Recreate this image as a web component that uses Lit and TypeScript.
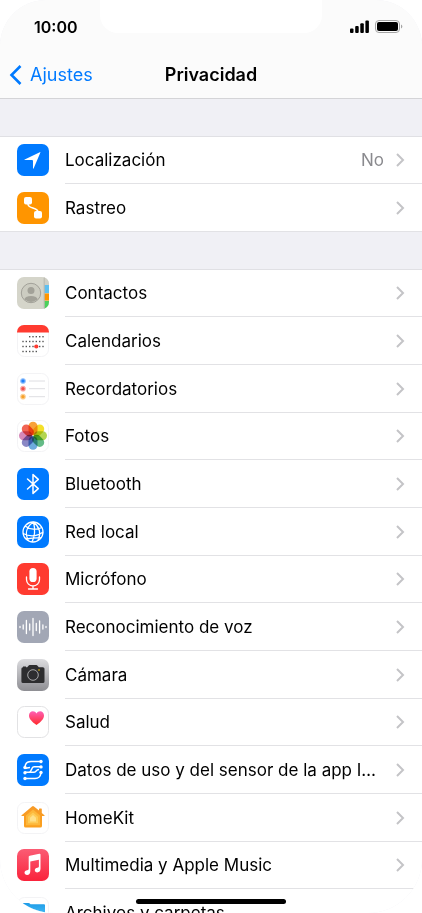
import { LitElement, html, svg, css, nothing, SVGTemplateResult } from "lit";
import { customElement, property } from "lit/decorators.js";

const petals = ["#f7941d", "#f2dc0c", "#a9cf38", "#4fb276", "#5a9fd8", "#7a78bd", "#cf77ae", "#ef4e3c"];
const dotColumns = [6, 9.3, 12.7, 16, 19.3, 22.7, 26];
const dotRows: [number, number, number][] = [[11.7, 2, 7], [16.5, 0, 7], [21.5, 0, 7], [26.5, 0, 5]];

const outline = svg`<rect x=".5" y=".5" width="31" height="31" rx="7" fill="#fff" stroke="#f3f3f5"/>`;
const tile = (fill: string) => svg`<rect width="32" height="32" rx="7" fill=${fill}/>`;

const icons: Record<string, SVGTemplateResult> = {
  location: svg`${tile("#007aff")}<path d="M23.4 8.6 16.6 24.4q-.5.9-.6-.3V17q0-1-1-1H7.9q-1.200-.1-.2-.6L22.800 8.200q.8-.3.600.4z" fill="#fff"/>`,
  tracking: svg`${tile("#ff9500")}<path d="M11 9v3.200c0 4.600 10 3 10 7.800v3" fill="none" stroke="#fff" stroke-width="1.500"/><rect x="7" y="5" width="8" height="7.500" rx="2" fill="#fff"/><rect x="17" y="19" width="8" height="7.500" rx="2" fill="#fff"/>`,
  contacts: svg`<clipPath id="c"><rect width="32" height="32" rx="7"/></clipPath>
    <g clip-path="url(#c)"><rect width="32" height="32" fill="#d5d5ca"/><path d="M27.500 0H32v8h-4.500z" fill="#cfcfc5"/><path d="M27.500 8H32v8h-4.500z" fill="#5fc0f0"/><path d="M27.500 16.500H32v7h-4.500z" fill="#ff9500"/><path d="M27.500 24H32v8h-4.500z" fill="#4cd05c"/><path d="M27.200 0v32" stroke="#b0b0a6" stroke-width=".8"/></g>
    <clipPath id="p"><circle cx="14" cy="16" r="9"/></clipPath>
    <circle cx="14" cy="16" r="9.700" fill="#ccccc1" stroke="#9c9b93" stroke-width=".9"/>
    <g clip-path="url(#p)" fill="#a2a198"><circle cx="14" cy="13.600" r="3.500"/><ellipse cx="14" cy="22.500" rx="6.700" ry="3.600"/></g>`,
  calendar: svg`${outline}<path d="M0 7.500V7a7 7 0 0 1 7-7h18a7 7 0 0 1 7 7v.5z" fill="#ff3b30"/>
    ${dotRows.map(([y, from, to]) => dotColumns.slice(from, to).map((x) => svg`<rect x=${x - 0.7} y=${y - 0.7} width="1.400" height="1.400" fill="#555"/>`))}
    <circle cx="19.300" cy="21.500" r="2.100" fill="#ff3b30"/>`,
  reminders: svg`${outline}${[["#1f80fa", 8], ["#f2504a", 15.7], ["#f7a12a", 23.7]].map(
    ([c, y]) => svg`<circle cx="6" cy=${y} r="2.600" fill=${c} fill-opacity=".35" stroke=${c} stroke-opacity=".5" stroke-width=".6"/><circle cx="6" cy=${y} r="1.800" fill=${c}/><path d=${`M12 ${y}h16`} stroke="#dedee2"/>`)}`,
  photos: svg`${outline}<g class="petals">${petals.map(
    (c, i) => svg`<rect x="11.500" y="1.700" width="9" height="13.400" rx="4.500" fill=${c} fill-opacity=".88" transform=${`rotate(${i * 45} 16 15.700)`}/>`)}</g>`,
  bluetooth: svg`${tile("#007aff")}<path d="m10.500 11 10.800 9.600-5.300 4.800V6.600l5.300 4.800L10.500 21" fill="none" stroke="#fff" stroke-width="1.500" stroke-linejoin="round" stroke-linecap="round"/>`,
  network: svg`${tile("#007aff")}<g fill="none" stroke="#fff" stroke-width="1.300"><circle cx="16" cy="16" r="10"/><path d="M16.500 6C8 12 8 18 11.500 24.800M16.500 6c1.500 6 1.500 14-1.500 20M16.500 6c6 5 8 11 4.500 18.500M8 10c5 4 12 4 17 1.500M6 17.500c7 3.500 14 3 20-1.500M9 23c6-1 10-1.500 15-1"/></g>`,
  microphone: svg`${tile("#ff3b30")}<rect x="12.400" y="5" width="7.200" height="14" rx="3.600" fill="#fff"/><path d="M9.500 14v2.500a6.500 6.500 0 0 0 13 0V14M16 23v3M11.500 26h9" fill="none" stroke="#fff" stroke-width="1.300" stroke-linecap="round"/>`,
  speech: svg`${tile("#a2a7b5")}<path d="M3 15.500v1M6.200 14v4M9.400 9.500v13M12.700 13v6M16 7.500v17M19.300 12.500v7M22.600 10v12M25.900 14v4M29 15.500v1" stroke="#fff" stroke-width="1.300" stroke-linecap="round"/>`,
  camera: svg`<linearGradient id="g" x2="0" y2="1"><stop stop-color="#dcdcdf"/><stop offset="1" stop-color="#8e8e93"/></linearGradient>${tile("url(#g)")}
    <path d="M6 8.300V7.500h3v.8h1.200l1.500-1.900q.3-.4.900-.4h6.800q.600 0 .9.400l1.500 1.900h4q1.700 0 1.700 1.500v12.700q0 1.500-1.600 1.500H6q-1.600 0-1.600-1.500V9.800q0-1.500 1.600-1.500z" fill="#2d2d2f"/><circle cx="16" cy="16" r="5.300" fill="#2d2d2f" stroke="#b4b4b7" stroke-width=".9"/><circle cx="22" cy="11" r=".8" fill="#ffcc00"/>`,
  health: svg`<linearGradient id="h" x2="0" y2="1"><stop stop-color="#ff5fb5"/><stop offset="1" stop-color="#ff2a2a"/></linearGradient>
    <rect x=".5" y=".5" width="31" height="31" rx="7" fill="#fff" stroke="#e2e2e4"/><path d="M19.500 19C15 16 12 12.800 12 9.500c0-2.400 1.700-4.200 3.900-4.200 1.500 0 2.800.8 3.600 2.100.8-1.300 2.100-2.100 3.600-2.100 2.200 0 3.900 1.800 3.900 4.200 0 3.300-3 6.500-7.500 9.500z" fill="url(#h)"/>`,
  research: svg`${tile("#007aff")}<g fill="none" stroke="#fff" stroke-width="1.500"><path d="M24 7.500H14c-4 0-5.500 1.800-6 5M24 12.800h-7c-3 0-2 5.400-5 5.400H8M8 13.500c0 1.500 2 0 5 0M8 24.500h10c4 0 5.500-2 6-5.500M12 18.200h5c3 0 1.500-2.700 5-2.700"/></g><g fill="#fff"><circle cx="24" cy="7.500" r="1.700"/><circle cx="24" cy="12.900" r="1.700"/><circle cx="8" cy="13.500" r="1.700"/><circle cx="24" cy="18.500" r="1.700"/><circle cx="8" cy="18.700" r="1.700"/><circle cx="8" cy="24.500" r="1.700"/></g>`,
  home: svg`<linearGradient id="o" x2="0" y2="1"><stop stop-color="#f79a28"/><stop offset="1" stop-color="#fba01e"/></linearGradient>${outline}<path d="M15 4.400q1-.8 2 0l5 4.200V7q0-.6.600-.6h1.600q.6 0 .6.600v4l2.600 2.200q.7.800-.4.900H25v9.900q0 1.600-1.600 1.600H8.600Q7 25.600 7 24v-9.900H5q-1.100-.1-.4-.9z" fill="url(#o)"/><path d="m16 7.500 7 6v9.800H9v-9.800z" fill="#fdb73b"/><path d="m16 10.500 5 4.300v6.500H11v-6.500z" fill="#fecb57"/><path d="m16 13 3 2.700v3.800h-6v-3.800z" fill="#ffe08a"/>`,
  music: svg`<linearGradient id="m" x2="0" y2="1"><stop stop-color="#fb5c74"/><stop offset="1" stop-color="#fa233b"/></linearGradient>${tile("url(#m)")}<path d="M23.500 5.500v14.300c0 2.300-1.300 3.600-3.200 3.600-1.500 0-2.500-.9-2.500-2.200 0-1.500 1.100-2.200 2.600-2.500 1.200-.3 1.500-.5 1.500-1.500v-6.500l-8.600 1.800v9.700c0 2.300-1.300 3.700-3.200 3.700-1.500 0-2.600-.9-2.600-2.300 0-1.400 1.100-2.100 2.600-2.400 1.200-.3 1.600-.6 1.600-1.500V8c0-.8.4-1.200 1.100-1.300l9.500-2c.8-.1 1.200.1 1.200.8z" fill="#fff"/>`,
  files: svg`<linearGradient id="f" x2="0" y2="1"><stop stop-color="#1d9be8"/><stop offset="1" stop-color="#5fd0fa"/></linearGradient>${outline}<path d="M5 6h6.500q.8 0 1.300.6l.7.700h13.500q1 0 1 1V25H5z" fill="url(#f)"/><path d="M4 6 C12 11 20 14 28 15.500V27H4z" fill="#fff"/>`,
};

@customElement("settings-row")
class SettingsRow extends LitElement {
  @property() icon = "";
  @property() label = "";
  @property() value = "";

  static styles = css`
    :host { display: flex; height: 100%; }
    .row { display: flex; flex: 1; min-width: 0; color: #000; text-decoration: none; }
    .icon { width: 32px; height: 32px; flex: none; align-self: center; margin: 0 16px 0 17px; }
    .petals rect { mix-blend-mode: multiply; }
    .body { display: flex; align-items: center; flex: 1; min-width: 0; padding-right: 17px; }
    .label { flex: 1; min-width: 0; line-height: 24px; overflow: hidden; text-overflow: ellipsis; white-space: nowrap; }
    .value { color: #8a8a8e; }
    .chevron { width: 10px; height: 16px; flex: none; margin-left: 11px; }
  `;

  render() {
    return html`<a class="row" href="#">
      <svg class="icon" viewBox="0 0 32 32" aria-hidden="true">${icons[this.icon]}</svg>
      <span class="body">
        <span class="label">${this.label}</span>
        ${this.value ? html`<span class="value">${this.value}</span>` : nothing}
        <svg class="chevron" viewBox="0 0 10 16" aria-hidden="true"><path d="m2 2 6 6-6 6" fill="none" stroke="#c4c4c7" stroke-width="2"/></svg>
      </span>
    </a>`;
  }
}

const groups: { icon: string; label: string; value?: string }[][] = [
  [
    { icon: "location", label: "Localización", value: "No" },
    { icon: "tracking", label: "Rastreo" },
  ],
  [
    { icon: "contacts", label: "Contactos" },
    { icon: "calendar", label: "Calendarios" },
    { icon: "reminders", label: "Recordatorios" },
    { icon: "photos", label: "Fotos" },
    { icon: "bluetooth", label: "Bluetooth" },
    { icon: "network", label: "Red local" },
    { icon: "microphone", label: "Micrófono" },
    { icon: "speech", label: "Reconocimiento de voz" },
    { icon: "camera", label: "Cámara" },
    { icon: "health", label: "Salud" },
    { icon: "research", label: "Datos de uso y del sensor de la app Investigación" },
    { icon: "home", label: "HomeKit" },
    { icon: "music", label: "Multimedia y Apple Music" },
    { icon: "files", label: "Archivos y carpetas" },
  ],
];

@customElement("app-root")
class AppRoot extends LitElement {
  static styles = css`
    :host { display: block; height: 100vh; background: #fff; font-family: Inter, "Liberation Sans", sans-serif; font-size: 17px; color: #000; }
    .screen { position: relative; height: 100%; overflow: hidden; border-radius: 46px 46px 54px 54px; background: #f0f0f5; }
    .header { background: #fbfbfb; border-bottom: 1px solid #d4d4d7; }
    .status { display: grid; grid-template-columns: 100px 1fr 100px; height: 52px; }
    .time { padding: 17px 0 0 34px; font-size: 16px; line-height: 20px; font-weight: 600; }
    .notch { height: 33px; background: #fff; border-radius: 0 0 18px 18px; }
    .indicators { display: flex; gap: 6px; padding: 20px 0 0 28px; }
    .signal { width: 19px; height: 13px; }
    .battery { width: 28px; height: 13px; }
    .nav { display: grid; grid-template-columns: 1fr auto 1fr; align-items: center; height: 46px; font-size: 18px; line-height: 24px; }
    .back { display: flex; align-items: center; gap: 8px; padding-left: 9px; color: #007aff; text-decoration: none; }
    .back-icon { width: 13px; height: 22px; }
    .title { margin: 0; font-size: 18px; font-weight: 600; }
    .group { list-style: none; margin: 37px 0 0; padding: 0; border-top: 1px solid #e0e0e4; background: #fff; }
    .item { position: relative; height: 48px; box-sizing: border-box; padding-bottom: 1px; }
    .item:nth-child(3n + 1) { height: 47px; }
    .item::after { content: ""; position: absolute; left: 65px; right: 0; bottom: 0; height: 1px; background: #e2e2e5; }
    .item:last-child::after { left: 0; }
    .home-bar { position: absolute; bottom: 9px; left: 50%; width: 150px; height: 5px; margin-left: -75px; border-radius: 3px; background: #000; }
  `;

  render() {
    return html`<div class="screen">
      <header class="header">
        <div class="status">
          <span class="time">10:00</span>
          <span class="notch"></span>
          <span class="indicators">
            <svg class="signal" viewBox="0 0 19 13" aria-hidden="true"><rect y="8.500" width="3.500" height="4.500" rx="1"/><rect x="5.200" y="6" width="3.500" height="7" rx="1"/><rect x="10.300" y="3.300" width="3.500" height="9.700" rx="1"/><rect x="15.400" y=".5" width="3.500" height="12.500" rx="1"/></svg>
            <svg class="battery" viewBox="0 0 28 13" aria-hidden="true"><rect x=".5" y=".5" width="24" height="12" rx="3.500" fill="none" stroke="#a5a5a5"/><rect x="2" y="2" width="21" height="9" rx="2"/><path d="M26 4.500q1.300.5 1.300 2t-1.300 2z" fill="#a5a5a5"/></svg>
          </span>
        </div>
        <nav class="nav">
          <a class="back" href="#"><svg class="back-icon" viewBox="0 0 13 22" aria-hidden="true"><path d="M11.500 2 2.500 11l9 9" fill="none" stroke="#007aff" stroke-width="2.600"/></svg>Ajustes</a>
          <h1 class="title">Privacidad</h1>
        </nav>
      </header>
      <main>
        ${groups.map((rows) => html`<ul class="group">
          ${rows.map((r) => html`<li class="item"><settings-row .icon=${r.icon} .label=${r.label} .value=${r.value ?? ""}></settings-row></li>`)}
        </ul>`)}
      </main>
      <div class="home-bar"></div>
    </div>`;
  }
}
